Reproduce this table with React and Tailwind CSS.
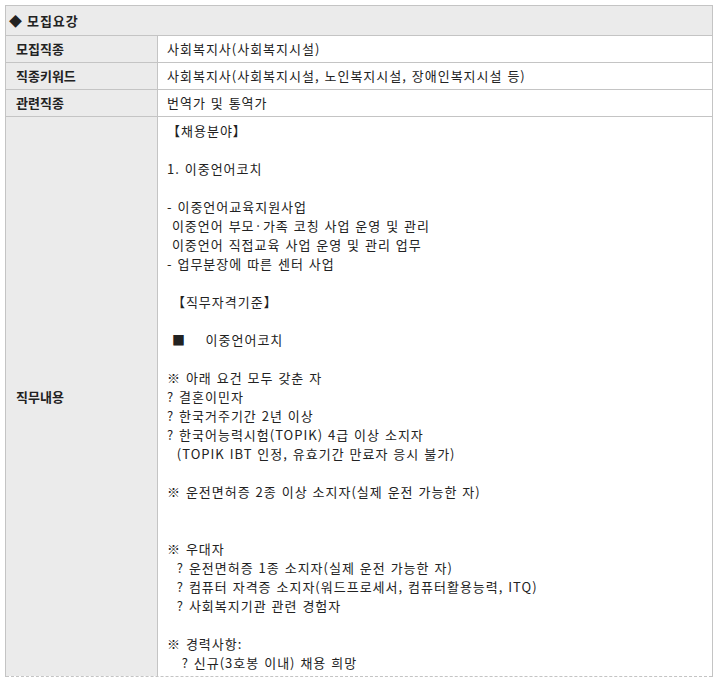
const rows = [
  { label: '모집직종', value: '사회복지사(사회복지시설)' },
  { label: '직종키워드', value: '사회복지사(사회복지시설, 노인복지시설, 장애인복지시설 등)' },
  { label: '관련직종', value: '번역가 및 통역가' },
];

// job description lines; blank strings are empty lines
const duties = [
  '【채용분야】',
  '',
  '1. 이중언어코치',
  '',
  '- 이중언어교육지원사업',
  ' 이중언어 부모·가족 코칭 사업 운영 및 관리',
  ' 이중언어 직접교육 사업 운영 및 관리 업무',
  '- 업무분장에 따른 센터 사업',
  '',
  ' 【직무자격기준】',
  '',
  ' ■    이중언어코치',
  '',
  '※ 아래 요건 모두 갖춘 자',
  '? 결혼이민자',
  '? 한국거주기간 2년 이상',
  '? 한국어능력시험(TOPIK) 4급 이상 소지자',
  '  (TOPIK IBT 인정, 유효기간 만료자 응시 불가)',
  '',
  '※ 운전면허증 2종 이상 소지자(실제 운전 가능한 자)',
  '',
  '',
  '※ 우대자',
  '  ? 운전면허증 1종 소지자(실제 운전 가능한 자)',
  '  ? 컴퓨터 자격증 소지자(워드프로세서, 컴퓨터활용능력, ITQ)',
  '  ? 사회복지기관 관련 경험자',
  '',
  '※ 경력사항:',
  '   ? 신규(3호봉 이내) 채용 희망',
];

const App = () => {
  return (
    <div className="bg-white min-h-[686px] pt-[5px] pl-[5px] text-[13px] text-[#222] font-['Malgun_Gothic','Noto_Sans_CJK_KR',sans-serif]">
      <div className="w-[708px] border border-[#c4c4c4] border-b-0">
        {/* Header */}
        <div className="h-[30px] flex items-center pl-[3px] bg-[#ebebeb] border-b border-[#c4c4c4] font-bold tracking-[1px]">
          ◆ 모집요강
        </div>

        {rows.map((row) => (
          <div key={row.label} className="flex h-[27px] border-b border-[#c4c4c4]">
            <div className="w-[152px] shrink-0 bg-[#ebebeb] border-r border-[#c4c4c4] flex items-center pl-[10px] font-bold">
              {row.label}
            </div>
            <div className="flex-1 flex items-center pl-[9px] tracking-[1px] [word-spacing:1px]">{row.value}</div>
          </div>
        ))}

        {/* 직무내용 */}
        <div className="flex border-b border-dashed border-[#c4c4c4]">
          <div className="w-[152px] shrink-0 bg-[#ebebeb] border-r border-[#c4c4c4] flex items-center pl-[10px] font-bold">
            직무내용
          </div>
          <div className="flex-1 pl-[9px] pt-[4px] pb-[4px] leading-[19px] whitespace-pre tracking-[1px] [word-spacing:1px]">
            {duties.map((line, i) => (
              <div key={i} className="h-[19px]">
                {line}
              </div>
            ))}
          </div>
        </div>
      </div>
    </div>
  );
};

export default App;
